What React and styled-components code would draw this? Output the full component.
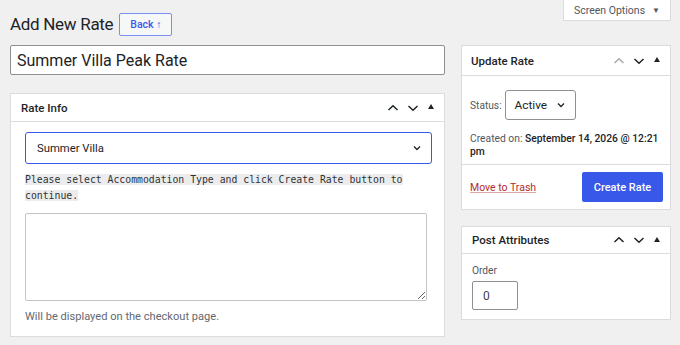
import React from "react";
import styled, { createGlobalStyle } from "styled-components";

const GlobalStyle = createGlobalStyle`
  html, body {
    margin: 0;
    padding: 0;
    background: #f0f0f1;
    font-family: Roboto, "Noto Sans", sans-serif;
    color: #1d2327;
  }
`;

const Page = styled.div`
  width: 680px;
  height: 345px;
  padding: 0 9px 0 10px;
  box-sizing: border-box;
  overflow: hidden;
`;

const TopBar = styled.div`
  display: flex;
  justify-content: space-between;
  align-items: flex-start;
  height: 45px;
`;

const TitleRow = styled.div`
  display: flex;
  align-items: center;
  gap: 6px;
  padding-top: 11px;
`;

const Heading = styled.h1`
  margin: 0;
  font-size: 17px;
  font-weight: 400;
  line-height: 26px;
  letter-spacing: -0.3px;
`;

const BackButton = styled.button`
  height: 23px;
  padding: 0 10px;
  border: 1px solid #7b8ff0;
  border-radius: 2px;
  background: #f6f7f7;
  color: #3858e9;
  font-family: inherit;
  font-size: 10.5px;
  font-weight: 500;
`;

const ScreenOptions = styled.button`
  height: 21px;
  width: 108px;
  border: 1px solid #dcdcde;
  border-top: none;
  background: #fff;
  color: #50575e;
  font-family: inherit;
  font-size: 10.5px;
  display: flex;
  align-items: center;
  justify-content: center;
  gap: 7px;
  padding: 0;
`;

const Columns = styled.div`
  display: grid;
  grid-template-columns: 435px 210px;
  gap: 16px;
  align-items: start;
`;

const Main = styled.div`
  display: flex;
  flex-direction: column;
  gap: 18px;
`;

const Side = styled.div`
  display: flex;
  flex-direction: column;
  gap: 16px;
`;

const TitleInput = styled.input`
  height: 30px;
  box-sizing: border-box;
  border: 1px solid #8c8f94;
  border-radius: 2px;
  background: #fff;
  padding: 0 6px;
  font-family: inherit;
  font-size: 16px;
  color: #1d2327;
  outline: none;
`;

const Box = styled.div`
  background: #fff;
  border: 1px solid #dcdcde;
`;

const BoxHeader = styled.div`
  display: flex;
  align-items: center;
  justify-content: space-between;
  height: ${(p) => p.$h}px;
  border-bottom: 1px solid #dcdcde;
  padding: 0 7px 0 ${(p) => p.$pl}px;
`;

const BoxTitle = styled.h2`
  margin: 0;
  font-size: 11.5px;
  font-weight: 500;
`;

const Controls = styled.div`
  display: flex;
  align-items: center;
  gap: 4px;
`;

const Chevron = styled.svg`
  width: 16px;
  height: 16px;
  stroke: ${(p) => (p.$muted ? "#a7aaad" : "#1d2327")};
  fill: none;
  stroke-width: 1.5;
`;

const Caret = styled.span`
  width: 0;
  height: 0;
  margin: 0 3px 2px 3px;
  border-left: 3.5px solid transparent;
  border-right: 3.5px solid transparent;
  border-bottom: 5px solid #1d2327;
`;

const BoxBody = styled.div`
  padding: ${(p) => p.$pad};
  display: flex;
  flex-direction: column;
  align-items: flex-start;
`;

const Select = styled.div`
  box-sizing: border-box;
  display: flex;
  align-items: center;
  justify-content: space-between;
  background: #fff;
  border: ${(p) => (p.$focus ? "1.5px solid #3858e9" : "1px solid #8c8f94")};
  border-radius: 3px;
  width: ${(p) => p.$w};
  height: ${(p) => p.$h}px;
  padding: 0 9px 0 ${(p) => p.$pl}px;
  font-size: ${(p) => p.$fs}px;
  color: #1d2327;
`;

const Notice = styled.p`
  margin: 8px 0 0;
  font-family: "DejaVu Sans Mono", "Liberation Mono", monospace;
  font-size: 9.8px;
  line-height: 16px;
  color: #2c3338;
  width: 400px;
  code {
    font-family: inherit;
    background: #ececec;
  }
`;

const TextArea = styled.textarea`
  box-sizing: border-box;
  margin-top: 9px;
  width: 402px;
  height: 88px;
  border: 1px solid #c3c4c7;
  border-radius: 2px;
  background: #fff;
  resize: vertical;
`;

const Hint = styled.p`
  margin: 9px 0 0;
  font-size: 11.1px;
  color: #646970;
`;

const Row = styled.div`
  display: flex;
  align-items: center;
  gap: 3px;
`;

const Label = styled.span`
  font-size: 10.2px;
  color: #50575e;
`;

const Meta = styled.div`
  margin-top: 12px;
  font-size: 10.3px;
  line-height: 13px;
  color: #50575e;
`;

const MetaValue = styled.span`
  font-weight: 500;
  color: #1d2327;
`;

const Actions = styled.div`
  display: flex;
  align-items: center;
  justify-content: space-between;
  border-top: 1px solid #dcdcde;
  padding: 7px 7px 7px 8px;
`;

const TrashLink = styled.a`
  font-size: 10.5px;
  color: #b32d2e;
  text-decoration: underline;
  text-decoration-color: #e0a8a8;
`;

const PrimaryButton = styled.button`
  height: 30px;
  width: 81px;
  border: none;
  border-radius: 2px;
  background: #3858e9;
  color: #fff;
  font-family: inherit;
  font-size: 11px;
  font-weight: 500;
  padding: 0;
`;

const SmallInput = styled.div`
  box-sizing: border-box;
  margin-top: 5px;
  width: 46px;
  height: 29px;
  border: 1px solid #8c8f94;
  border-radius: 2px;
  display: flex;
  align-items: center;
  padding-left: 10px;
  font-size: 12px;
  color: #3c434a;
`;

const Up = ({ muted }) => (
  <Chevron viewBox="0 0 16 16" $muted={muted}>
    <path d="M3.5 10 8 5.8 12.5 10" />
  </Chevron>
);

const Down = () => (
  <Chevron viewBox="0 0 16 16">
    <path d="M3.5 6 8 10.2 12.5 6" />
  </Chevron>
);

const SmallDown = () => (
  <svg width="10" height="10" viewBox="0 0 10 10" fill="none" stroke="#1d2327" strokeWidth="1.3">
    <path d="M2 3.5 5 6.5 8 3.5" />
  </svg>
);

const BoxControls = ({ upMuted }) => (
  <Controls>
    <Up muted={upMuted} />
    <Down />
    <Caret />
  </Controls>
);

export default function App() {
  return (
    <>
      <GlobalStyle />
      <Page>
        <TopBar>
          <TitleRow>
            <Heading>Add New Rate</Heading>
            <BackButton>Back ↑</BackButton>
          </TitleRow>
          <ScreenOptions>
            Screen Options <span style={{ fontSize: 8 }}>▼</span>
          </ScreenOptions>
        </TopBar>
        <Columns>
          <Main>
            <TitleInput defaultValue="Summer Villa Peak Rate" />
            <Box>
              <BoxHeader $h={27} $pl={10}>
                <BoxTitle>Rate Info</BoxTitle>
                <BoxControls />
              </BoxHeader>
              <BoxBody $pad="10px 13px 13px 14px">
                <Select $focus $w="407px" $h={32} $pl={11} $fs={11.3}>
                  Summer Villa
                  <SmallDown />
                </Select>
                <Notice>
                  <code>
                    {" "}Please select Accommodation Type and click Create Rate button to continue.
                  </code>
                </Notice>
                <TextArea />
                <Hint>Will be displayed on the checkout page.</Hint>
              </BoxBody>
            </Box>
          </Main>
          <Side>
            <Box>
              <BoxHeader $h={29} $pl={9}>
                <BoxTitle>Update Rate</BoxTitle>
                <BoxControls upMuted />
              </BoxHeader>
              <BoxBody $pad="14px 4px 6px 8px">
                <Row>
                  <Label>Status:</Label>
                  <Select $w="71px" $h={30} $pl={9} $fs={11.8}>
                    Active
                    <SmallDown />
                  </Select>
                </Row>
                <Meta>
                  Created on: <MetaValue>September 14, 2026 @ 12:21 pm</MetaValue>
                </Meta>
              </BoxBody>
              <Actions>
                <TrashLink>Move to Trash</TrashLink>
                <PrimaryButton>Create Rate</PrimaryButton>
              </Actions>
            </Box>
            <Box>
              <BoxHeader $h={26} $pl={10}>
                <BoxTitle>Post Attributes</BoxTitle>
                <BoxControls />
              </BoxHeader>
              <BoxBody $pad="11px 10px 9px 10px">
                <Label>Order</Label>
                <SmallInput>0</SmallInput>
              </BoxBody>
            </Box>
          </Side>
        </Columns>
      </Page>
    </>
  );
}
